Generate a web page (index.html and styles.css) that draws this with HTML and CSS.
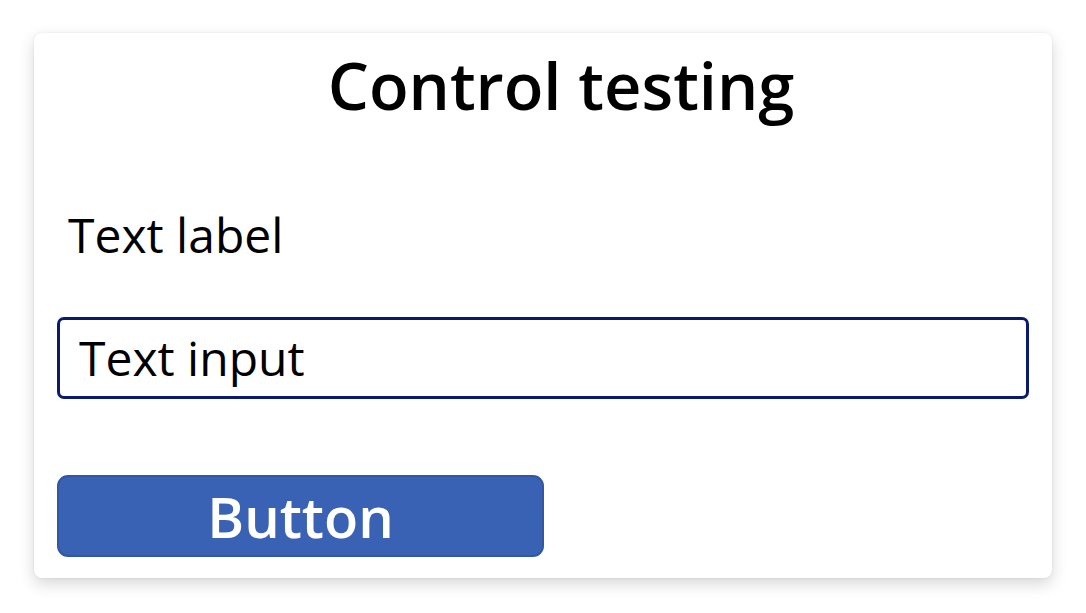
FILE: index.html
```html
<!DOCTYPE html>
<html>
<head>
<meta charset="utf-8">
<link rel="stylesheet" href="styles.css">
</head>
<body>
<div class="card">
  <h1 class="title">Control testing</h1>
  <div class="label">Text label</div>
  <div class="input">Text input</div>
  <button class="button">Button</button>
</div>
</body>
</html>
```
FILE: styles.css
```css
html, body {
  margin: 0;
  padding: 0;
  background: #ffffff;
}
body {
  font-family: "Open Sans", "Noto Sans", sans-serif;
  color: #000;
  width: 1086px;
  height: 613px;
  overflow: hidden;
}
.card {
  box-sizing: border-box;
  margin: 33px 0 0 34px;
  width: 1018px;
  height: 545px;
  background: #fff;
  border-radius: 8px;
  box-shadow: 0 6px 16px rgba(0, 0, 0, 0.16), 0 0 3px rgba(0, 0, 0, 0.07);
  padding: 14px 23px 0 23px;
  display: flex;
  flex-direction: column;
  align-items: flex-start;
}
.title {
  margin: 0;
  align-self: stretch;
  padding-left: 36px;
  text-align: center;
  font-size: 65px;
  font-weight: 600;
  line-height: 76px;
}
.label {
  margin-top: 81px;
  padding-left: 11px;
  font-size: 48px;
  line-height: 62px;
}
.input {
  box-sizing: border-box;
  margin-top: 51px;
  align-self: stretch;
  height: 82px;
  border: 3px solid #0c1a6e;
  border-radius: 7px;
  padding-left: 19px;
  font-size: 48px;
  line-height: 76px;
}
.button {
  box-sizing: border-box;
  margin-top: 76px;
  width: 487px;
  height: 82px;
  border: 2px solid #3157a5;
  border-radius: 11px;
  background: #3961b4;
  color: #fff;
  font-family: "Open Sans", "Noto Sans", sans-serif;
  font-size: 56px;
  font-weight: 600;
  line-height: 78px;
  padding: 0;
  text-align: center;
}
```
